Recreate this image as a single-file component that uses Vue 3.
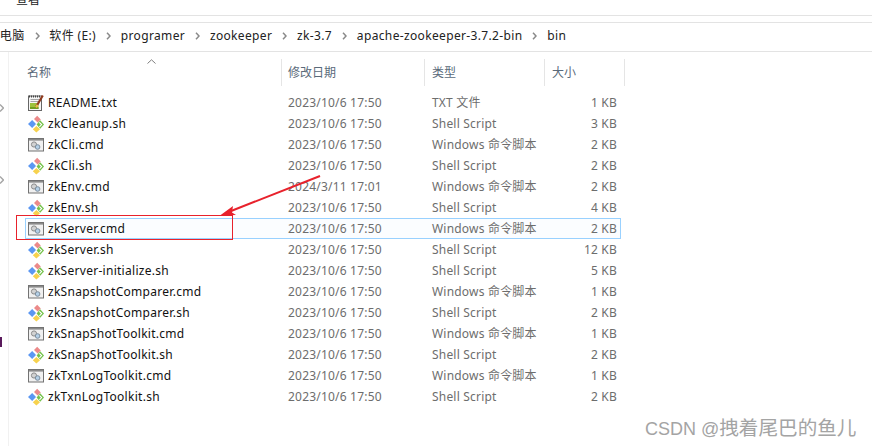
<script setup>
const cols = { d: '2023/10/6 17:50', c: 'Windows 命令脚本', s: 'Shell Script' }
const files = [
  { n: 'README.txt', i: 'txt', t: 'TXT 文件', z: '1 KB' },
  { n: 'zkCleanup.sh', i: 'sh', t: cols.s, z: '3 KB' },
  { n: 'zkCli.cmd', i: 'cmd', t: cols.c, z: '2 KB' },
  { n: 'zkCli.sh', i: 'sh', t: cols.s, z: '2 KB' },
  { n: 'zkEnv.cmd', i: 'cmd', t: cols.c, z: '2 KB', d: '2024/3/11 17:01' },
  { n: 'zkEnv.sh', i: 'sh', t: cols.s, z: '4 KB' },
  { n: 'zkServer.cmd', i: 'cmd', t: cols.c, z: '2 KB', sel: true },
  { n: 'zkServer.sh', i: 'sh', t: cols.s, z: '12 KB' },
  { n: 'zkServer-initialize.sh', i: 'sh', t: cols.s, z: '5 KB' },
  { n: 'zkSnapshotComparer.cmd', i: 'cmd', t: cols.c, z: '1 KB' },
  { n: 'zkSnapshotComparer.sh', i: 'sh', t: cols.s, z: '2 KB' },
  { n: 'zkSnapShotToolkit.cmd', i: 'cmd', t: cols.c, z: '1 KB' },
  { n: 'zkSnapShotToolkit.sh', i: 'sh', t: cols.s, z: '2 KB' },
  { n: 'zkTxnLogToolkit.cmd', i: 'cmd', t: cols.c, z: '1 KB' },
  { n: 'zkTxnLogToolkit.sh', i: 'sh', t: cols.s, z: '2 KB' },
]
const crumbs = ['电脑', '软件 (E:)', 'programer', 'zookeeper', 'zk-3.7', 'apache-zookeeper-3.7.2-bin', 'bin']
</script>

<template>
  <div class="win">
    <div class="ribbon"><span class="ribbon-label">查看</span></div>
    <div class="crumbs">
      <template v-for="(c, i) in crumbs" :key="c">
        <span class="crumb">{{ c }}</span>
        <svg v-if="i < crumbs.length - 1" class="sep" width="5" height="8" viewBox="0 0 5 8"><path d="M1 0.8 L4 4 L1 7.2" fill="none" stroke="#8a8a8a" stroke-width="1.5"/></svg>
      </template>
    </div>
    <div class="body">
      <div class="nav"></div>
      <div class="list">
        <div class="head">
          <svg class="sort" width="9" height="5" viewBox="0 0 9 5"><path d="M0.5 4.5 L4.5 0.8 L8.5 4.5" fill="none" stroke="#7f7f7f"/></svg>
          <div class="hc c-name first">名称</div>
          <div class="hc c-date">修改日期</div>
          <div class="hc c-type">类型</div>
          <div class="hc c-size head-size">大小</div>
        </div>
        <div v-for="f in files" :key="f.n" class="row" :class="{ sel: f.sel }">
          <div class="c-name name">
            <svg v-if="f.i === 'txt'" class="ico" width="18" height="18" viewBox="0 0 18 18">
              <rect x="1.5" y="2" width="13" height="14.5" fill="#f6f6f6" stroke="#666"/>
              <path d="M2 2.5h12" stroke="#444" stroke-width="1.8" stroke-dasharray="1 1"/>
              <path d="M3.5 5.5h9M3.5 7.5h9" stroke="#a5a5a5"/>
              <rect x="3" y="9" width="8.5" height="6" fill="#9cc23c"/>
              <rect x="3" y="13" width="8.5" height="2" fill="#6f9d1f"/>
              <path d="M9 13 L15.8 1.5" stroke="#8f3a1e" stroke-width="2.2"/>
              <path d="M9 13.4 L10.6 10.8" stroke="#e8bd4a" stroke-width="2.2"/>
            </svg>
            <svg v-else-if="f.i === 'sh'" class="ico" width="18" height="18" viewBox="0 0 18 18">
              <path d="M10.2 0.8 L13.8 4.4 L10.6 7.6 L7 4 Z" fill="#ec8a8a"/>
              <path d="M13.2 5.2 L17 9.6 L13.2 13.8 L9.6 9.6 Z" fill="#74c24a"/>
              <path d="M9.4 11 L13 14.2 L9.4 17.6 L5.8 14.2 Z" fill="#f7d24e"/>
              <path d="M5.2 5 L9 9 L5.2 13 L1 9 Z" fill="#5b97f2"/>
              <path d="M12.3 7.4 L14.6 9.6 L12.4 11.8" fill="none" stroke="#fff" stroke-width="1.1"/>
            </svg>
            <svg v-else class="ico" width="18" height="18" viewBox="0 0 18 18">
              <rect x="1.5" y="2.5" width="15" height="12.5" fill="#f0f0f0" stroke="#737373"/>
              <rect x="2" y="3" width="14" height="1.6" fill="#8a8a8a"/>
              <circle cx="7" cy="8.5" r="2.6" fill="#d2d2d2" stroke="#8b8b8b"/>
              <circle cx="10.6" cy="11" r="2.3" fill="#b4cfe6" stroke="#7c8e9e"/>
            </svg>
            <span>{{ f.n }}</span>
          </div>
          <div class="c-date meta">{{ f.d || cols.d }}</div>
          <div class="c-type meta">{{ f.t }}</div>
          <div class="c-size meta right">{{ f.z }}</div>
        </div>
      </div>
    </div>

    <svg class="chev c1" width="4" height="8" viewBox="0 0 4 8"><path d="M0 0.5 L3.4 4 L0 7.5" fill="none" stroke="#a6a6a6" stroke-width="1.4"/></svg>
    <svg class="chev c2" width="4" height="8" viewBox="0 0 4 8"><path d="M0 0.5 L3.4 4 L0 7.5" fill="none" stroke="#a6a6a6" stroke-width="1.4"/></svg>
    <div class="mark"></div>
    <div class="redbox"></div>
    <svg class="arrow" width="112" height="44" viewBox="0 0 112 44">
      <path d="M101 2 L7 39" stroke="#e8222c" stroke-width="2" fill="none"/>
      <path d="M1 41.5 L14 32 L13 38.5 L17 41 Z" fill="#e8222c"/>
    </svg>
    <div class="mark-text">CSDN @<span class="mark-cjk">拽着尾巴的鱼儿</span></div>
  </div>
</template>

<style>
html, body { margin: 0; background: #fff; }
</style>

<style scoped>
.win {
  position: relative;
  width: 872px;
  height: 446px;
  overflow: hidden;
  background: #fff;
  font: 12px/16px "Noto Sans", "Noto Sans CJK SC", sans-serif;
  color: #1a1a1a;
}
.ribbon {
  height: 15px;
  border-bottom: 1px solid #e3e3e3;
  overflow: hidden;
}
.ribbon-label {
  display: block;
  margin: -9px 0 0 16px;
  line-height: 18px;
  font-size: 12px;
}
.crumbs {
  margin-top: 6px;
  height: 30px;
  box-sizing: border-box;
  padding-bottom: 3px;
  border-top: 1px solid #e3e3e3;
  border-bottom: 1px solid #e3e3e3;
  display: flex;
  align-items: center;
  gap: 9px;
  color: #222;
  letter-spacing: 0.35px;
}
.crumb { margin-left: -0.2px; }
.crumbs .sep { margin: 0 1px; }
.body { display: flex; }
.nav {
  width: 8px;
  height: 394px;
  border-right: 1px solid #f1f1f1;
}
.list { position: relative; padding: 7px 0 0 16px; }
.head {
  display: flex;
  height: 27px;
  margin-bottom: 6px;
  position: relative;
  color: #5a6a7a;
}
.sort { position: absolute; left: 122px; top: 0; }
.hc {
  display: flex;
  align-items: center;
  padding-left: 6px;
  box-sizing: border-box;
  border-right: 1px solid #e5e5e5;
}
.hc.first { padding-left: 2px; }
.hc.c-type { padding-left: 7px; }
.hc.head-size { width: 80px; padding-left: 7px; }
.row { display: flex; width: 596px; height: 21px; align-items: center; box-sizing: border-box; }
.row.sel {
  background: #fbfdff;
  outline: 1px solid #99d1ff;
  outline-offset: -1px;
}
.c-name { width: 257px; flex: none; }
.c-date { width: 143px; flex: none; }
.c-type { width: 120px; flex: none; }
.c-size { width: 76px; flex: none; }
.name { display: flex; align-items: center; gap: 3px; padding-left: 2px; box-sizing: border-box; color: #111; letter-spacing: 0.28px; white-space: nowrap; }
.ico { flex: none; }
.meta { color: #6d6d6d; padding-left: 6px; box-sizing: border-box; letter-spacing: 0.2px; }
.c-type.meta { padding-left: 7px; }
.right { text-align: right; padding-right: 4px; }
.chev { position: absolute; left: 0; }
.c1 { top: 104px; }
.c2 { top: 176px; }
.mark { position: absolute; left: 0; top: 337px; width: 2px; height: 10px; background: #5a1a5c; }
.redbox {
  position: absolute;
  left: 16px;
  top: 215px;
  width: 215px;
  height: 23px;
  border: 1px solid #e8222c;
}
.arrow { position: absolute; left: 219px; top: 174px; }
.mark-text {
  position: absolute;
  left: 645px;
  top: 416px;
  font: 18px/24px "Liberation Sans", "Noto Sans CJK SC", sans-serif;
  color: #a4a4a4;
  white-space: nowrap;
}
.mark-cjk { font-size: 19.6px; }
</style>
